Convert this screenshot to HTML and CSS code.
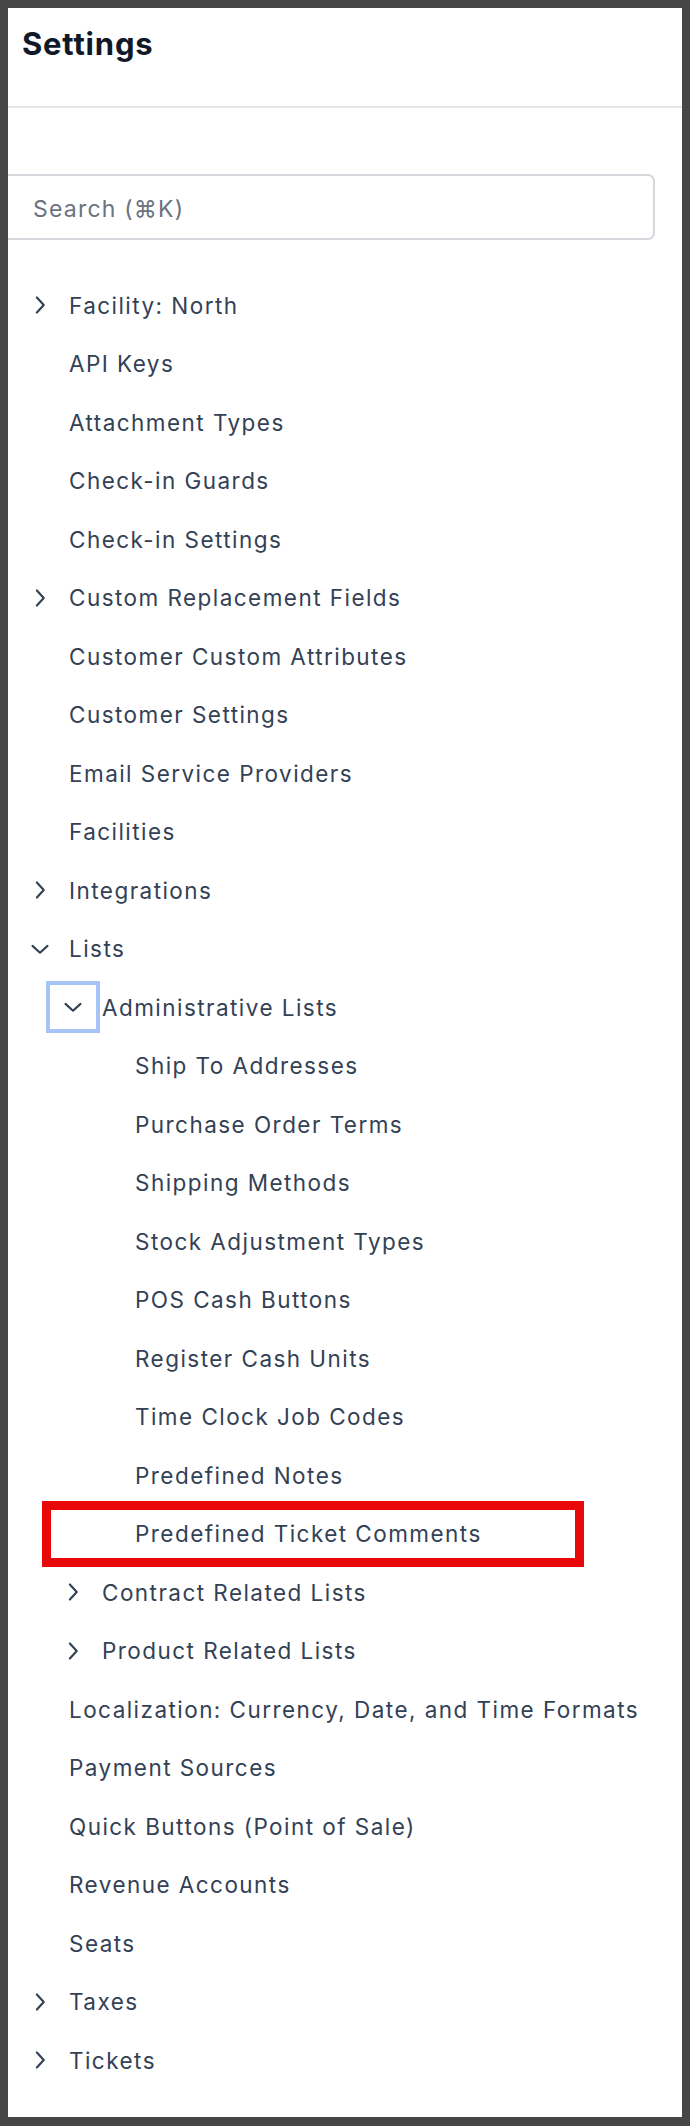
FILE: index.html
```html
<!DOCTYPE html>
<html lang="en">
<head>
  <meta charset="UTF-8" />
  <meta name="viewport" content="width=device-width, initial-scale=1.0"/>
  <title>Settings</title>
  <link rel="stylesheet" href="styles.css">
</head>
<body>
  <div class="panel">
    <div class="header">
      <h1>Settings</h1>
    </div>
    <div class="search">
      <input type="text" placeholder="Search (⌘K)">
    </div>
    <ul class="tree">
      <li class="row"><span class="toggle"><svg class="chev" viewBox="0 0 16 16"><polyline points="5.5,2 11,8 5.5,14"/></svg></span><span class="label">Facility: North</span></li>
      <li class="row"><span class="toggle"></span><span class="label">API Keys</span></li>
      <li class="row"><span class="toggle"></span><span class="label">Attachment Types</span></li>
      <li class="row"><span class="toggle"></span><span class="label">Check-in Guards</span></li>
      <li class="row"><span class="toggle"></span><span class="label">Check-in Settings</span></li>
      <li class="row"><span class="toggle"><svg class="chev" viewBox="0 0 16 16"><polyline points="5.5,2 11,8 5.5,14"/></svg></span><span class="label">Custom Replacement Fields</span></li>
      <li class="row"><span class="toggle"></span><span class="label">Customer Custom Attributes</span></li>
      <li class="row"><span class="toggle"></span><span class="label">Customer Settings</span></li>
      <li class="row"><span class="toggle"></span><span class="label">Email Service Providers</span></li>
      <li class="row"><span class="toggle"></span><span class="label">Facilities</span></li>
      <li class="row"><span class="toggle"><svg class="chev" viewBox="0 0 16 16"><polyline points="5.5,2 11,8 5.5,14"/></svg></span><span class="label">Integrations</span></li>
      <li class="row"><span class="toggle"><svg class="chev open" viewBox="0 0 16 16"><polyline points="5.5,2 11,8 5.5,14"/></svg></span><span class="label">Lists</span></li>
      <li class="row lvl1"><span class="toggle focused"><svg class="chev open" viewBox="0 0 16 16"><polyline points="5.5,2 11,8 5.5,14"/></svg></span><span class="label">Administrative Lists</span></li>
      <li class="row lvl2"><span class="toggle"></span><span class="label">Ship To Addresses</span></li>
      <li class="row lvl2"><span class="toggle"></span><span class="label">Purchase Order Terms</span></li>
      <li class="row lvl2"><span class="toggle"></span><span class="label">Shipping Methods</span></li>
      <li class="row lvl2"><span class="toggle"></span><span class="label">Stock Adjustment Types</span></li>
      <li class="row lvl2"><span class="toggle"></span><span class="label">POS Cash Buttons</span></li>
      <li class="row lvl2"><span class="toggle"></span><span class="label">Register Cash Units</span></li>
      <li class="row lvl2"><span class="toggle"></span><span class="label">Time Clock Job Codes</span></li>
      <li class="row lvl2"><span class="toggle"></span><span class="label">Predefined Notes</span></li>
      <li class="row lvl2 marked"><span class="toggle"></span><span class="label">Predefined Ticket Comments</span><span class="mark"></span></li>
      <li class="row lvl1"><span class="toggle"><svg class="chev" viewBox="0 0 16 16"><polyline points="5.5,2 11,8 5.5,14"/></svg></span><span class="label">Contract Related Lists</span></li>
      <li class="row lvl1"><span class="toggle"><svg class="chev" viewBox="0 0 16 16"><polyline points="5.5,2 11,8 5.5,14"/></svg></span><span class="label">Product Related Lists</span></li>
      <li class="row"><span class="toggle"></span><span class="label">Localization: Currency, Date, and Time Formats</span></li>
      <li class="row"><span class="toggle"></span><span class="label">Payment Sources</span></li>
      <li class="row"><span class="toggle"></span><span class="label">Quick Buttons (Point of Sale)</span></li>
      <li class="row"><span class="toggle"></span><span class="label">Revenue Accounts</span></li>
      <li class="row"><span class="toggle"></span><span class="label">Seats</span></li>
      <li class="row"><span class="toggle"><svg class="chev" viewBox="0 0 16 16"><polyline points="5.5,2 11,8 5.5,14"/></svg></span><span class="label">Taxes</span></li>
      <li class="row"><span class="toggle"><svg class="chev" viewBox="0 0 16 16"><polyline points="5.5,2 11,8 5.5,14"/></svg></span><span class="label">Tickets</span></li>
    </ul>
  </div>
</body>
</html>
```

FILE: styles.css
```css
html, body {
  margin: 0;
}
body {
  background-color: #464646;
  padding: 8px 8px 9px 8px;
  font-family: Inter, "Noto Sans", sans-serif;
  color: #334155;
}
.panel {
  background-color: #ffffff;
  height: 2109px;
  overflow: hidden;
}
.header {
  height: 100px;
  border-bottom: 2px solid #e6e6e6;
  padding: 0 0 0 14px;
  box-sizing: border-box;
}
.header h1 {
  margin: 0;
  padding-top: 17px;
  font-size: 31px;
  line-height: 38px;
  font-weight: 700;
  letter-spacing: 0.8px;
  color: #111827;
}
.search {
  padding-top: 66px;
}
.search input {
  display: block;
  box-sizing: border-box;
  margin-left: -12px;
  width: 659px;
  height: 66px;
  border: 2px solid #d4d7dc;
  border-radius: 7px;
  padding: 3px 0 0 35px;
  font-family: Inter, "Noto Sans", sans-serif;
  font-size: 23px;
  letter-spacing: 1.2px;
  color: #334155;
  outline: none;
}
.search input::placeholder {
  color: #6b7280;
}
.tree {
  list-style: none;
  margin: 36px 0 0 0;
  padding: 0;
}
.row {
  position: relative;
  display: flex;
  align-items: center;
  height: 58.5px;
  padding-left: 8px;
  font-size: 22.5px;
  letter-spacing: 1.45px;
}
.row.lvl1 {
  padding-left: 41px;
}
.row.lvl2 {
  padding-left: 74px;
}
.toggle {
  display: flex;
  align-items: center;
  justify-content: center;
  flex: none;
  width: 48px;
  height: 46px;
  box-sizing: border-box;
  margin-right: 5px;
}
.toggle.focused {
  outline: 4px solid #a6c4f7;
  outline-offset: -1px;
}
.chev {
  width: 20px;
  height: 20px;
  fill: none;
  stroke: #334155;
  stroke-width: 1.7;
  stroke-linecap: round;
  stroke-linejoin: round;
}
.chev.open {
  transform: rotate(90deg);
}
.label {
  white-space: nowrap;
}
.mark {
  position: absolute;
  left: 34px;
  top: -3.5px;
  width: 542px;
  height: 66px;
  box-sizing: border-box;
  border: 9px solid #e8080a;
}
```
